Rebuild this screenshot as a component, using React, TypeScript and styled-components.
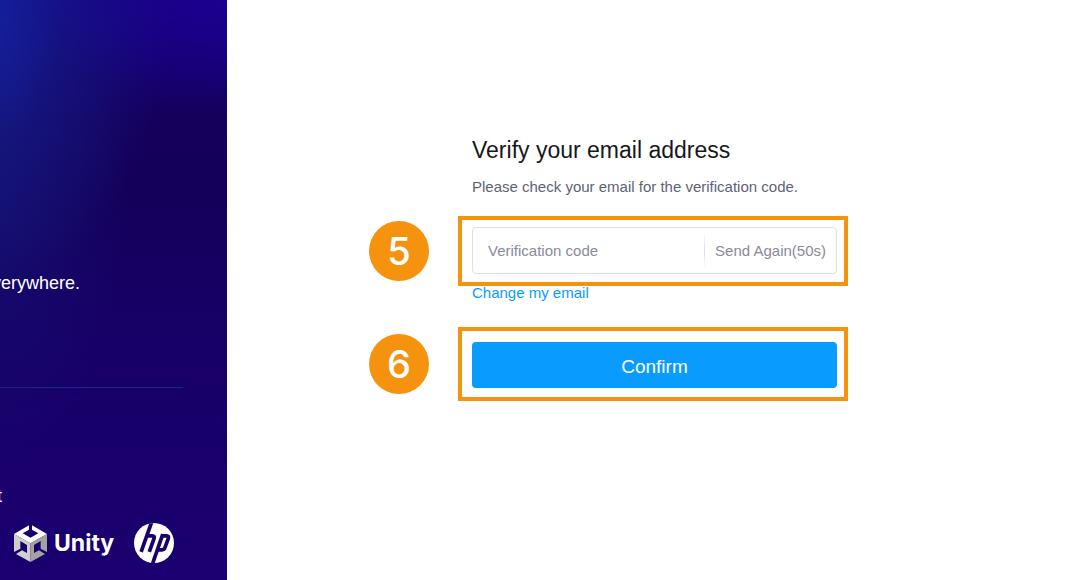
import React, { useState } from "react";
import styled, { createGlobalStyle } from "styled-components";

const GlobalStyle = createGlobalStyle`
  * { box-sizing: border-box; }
  body {
    margin: 0;
    background: #fff;
    font-family: "Liberation Sans", Arial, sans-serif;
  }
`;

const Page = styled.div`
  display: flex;
  min-height: 100vh;
`;

const BrandPanel = styled.aside`
  flex: 0 0 227px;
  display: flex;
  flex-direction: column;
  align-items: flex-start;
  overflow: hidden;
  padding-top: 272px;
  color: #fff;
  background:
    radial-gradient(ellipse 210px 280px at -40px 20px, #1426a8 0%, rgba(20, 30, 140, 0.5) 50%, rgba(20, 20, 110, 0) 100%),
    radial-gradient(ellipse 200px 110px at 227px 0, #1c0090 0%, rgba(28, 0, 130, 0) 100%),
    radial-gradient(ellipse 130px 260px at 0 200px, rgba(20, 24, 120, 0.5) 0%, rgba(20, 20, 110, 0) 100%),
    linear-gradient(180deg, #16007c 0, #15005c 120px, #14005a 190px, #170066 320px, #1a0070 100%);
`;

const PanelText = styled.p<{ $width: number }>`
  display: flex;
  justify-content: flex-end;
  width: ${(p) => p.$width}px;
  margin: 0;
  font-size: 18px;
  line-height: 22px;
  white-space: nowrap;
`;

const Divider = styled.hr`
  width: 183px;
  height: 1px;
  margin: 93px 0 97px;
  border: 0;
  background: #14288a;
`;

const Logos = styled.div`
  display: flex;
  align-items: center;
  gap: 20px;
  margin-top: 16px;
  padding-left: 14px;
`;

const UnityLogo = styled.div`
  display: flex;
  align-items: center;
  gap: 7px;
  font-family: Inter, sans-serif;
  font-size: 23px;
  font-weight: 700;
  line-height: 28px;
`;

const Main = styled.main`
  flex: 1;
  display: flex;
  justify-content: center;
  padding: 135px 90px 0 0;
`;

const Form = styled.form`
  display: grid;
  grid-template-columns: 60px 390px;
  column-gap: 29px;
  align-content: start;
  align-items: center;
`;

const Intro = styled.header`
  grid-column: 2;
  padding: 0 0 20px 14px;
`;

const Title = styled.h1`
  margin: 0 0 12px;
  color: #17181c;
  font-size: 23px;
  font-weight: 400;
  line-height: 30px;
`;

const Hint = styled.p`
  margin: 0;
  color: #5b6478;
  font-size: 15px;
  line-height: 19px;
  white-space: nowrap;
`;

const StepBadge = styled.span`
  display: flex;
  align-items: center;
  justify-content: center;
  width: 60px;
  height: 60px;
  border-radius: 50%;
  background: #f5930f;
  color: #fff;
  font-family: Inter, "Liberation Sans", sans-serif;
  font-size: 38px;
  font-weight: 500;
  line-height: 60px;
`;

const Highlight = styled.div<{ $tall?: boolean }>`
  display: flex;
  align-items: center;
  height: ${(p) => (p.$tall ? 74 : 70)}px;
  padding: ${(p) => (p.$tall ? "2px 7px 0 10px" : "0 7px 1px 10px")};
  border: 4px solid #f5930f;
`;

const CodeField = styled.div`
  flex: 1;
  display: flex;
  align-items: center;
  height: 47px;
  border: 1px solid #dfe0e6;
  border-radius: 4px;
`;

const CodeInput = styled.input`
  flex: 1;
  min-width: 0;
  height: 40px;
  padding: 0 15px;
  border: 0;
  outline: 0;
  background: transparent;
  font: 15px "Liberation Sans", Arial, sans-serif;
  &::placeholder { color: #8a8a9c; opacity: 1; }
`;

const FieldDivider = styled.span`
  width: 1px;
  height: 36px;
  background: linear-gradient(180deg, #fff, #dcdce6 50%, #fff);
`;

const ResendButton = styled.button`
  padding: 0 10px;
  border: 0;
  background: transparent;
  color: #8a8a9c;
  font: 15px "Liberation Sans", Arial, sans-serif;
`;

const ChangeLink = styled.a`
  grid-column: 2;
  justify-self: start;
  margin: 0 0 27px 14px;
  color: #0a9bff;
  font-size: 15px;
  line-height: 14px;
  text-decoration: none;
`;

const ConfirmButton = styled.button`
  flex: 1;
  height: 46px;
  padding: 3px 0 0;
  border: 0;
  border-radius: 4px;
  background: #0a9bff;
  color: #fff;
  font: 19px "Liberation Sans", Arial, sans-serif;
`;

function UnityCube() {
  return (
    <svg width="33" height="37" viewBox="42 43 99 111" aria-hidden="true">
      <path fill="#fff" d="M87 44V57L68 68L91.5 81L115 68L96 57V44L141 70L91.5 98L42 70Z" />
      <path fill="#cfcfcf" d="M42 70L91.5 98V154L48 130L66 119L81 127V103L61 91V114L42 124Z" />
      <path fill="#a2a2a2" d="M141 70L91.5 98V154L135 130L117 119L102 127V103L122 91V114L141 124Z" />
    </svg>
  );
}

function HpLogo() {
  return (
    <svg width="40" height="40" viewBox="401 40 118 118" role="img" aria-label="HP">
      <defs>
        <clipPath id="hp-disc">
          <circle cx="460" cy="99" r="59" />
        </clipPath>
      </defs>
      <circle cx="460" cy="99" r="59" fill="#fff" />
      <g clipPath="url(#hp-disc)" fill="none" stroke="#1a006e" strokeWidth="11">
        <path d="M455 32L422 125" />
        <path d="M438 78H455Q463 78 460 86L446 125" />
        <path d="M486 73L454 165" />
        <path d="M482 78H497Q505 78 502 86L492 113Q490 119 484 119H470" />
      </g>
    </svg>
  );
}

export default function App() {
  const [code, setCode] = useState("");
  return (
    <Page>
      <GlobalStyle />
      <BrandPanel>
        <PanelText $width={80}>verywhere.</PanelText>
        <Divider />
        <PanelText $width={2}>t</PanelText>
        <Logos>
          <UnityLogo>
            <UnityCube />
            Unity
          </UnityLogo>
          <HpLogo />
        </Logos>
      </BrandPanel>
      <Main>
        <Form onSubmit={(e: React.FormEvent) => e.preventDefault()}>
          <Intro>
            <Title>Verify your email address</Title>
            <Hint>Please check your email for the verification code.</Hint>
          </Intro>
          <StepBadge>5</StepBadge>
          <Highlight>
            <CodeField>
              <CodeInput
                aria-label="Verification code"
                placeholder="Verification code"
                value={code}
                onChange={(e) => setCode(e.target.value)}
              />
              <FieldDivider />
              <ResendButton type="button">Send Again(50s)</ResendButton>
            </CodeField>
          </Highlight>
          <ChangeLink href="#change-email">Change my email</ChangeLink>
          <StepBadge>6</StepBadge>
          <Highlight $tall>
            <ConfirmButton type="submit">Confirm</ConfirmButton>
          </Highlight>
        </Form>
      </Main>
    </Page>
  );
}
